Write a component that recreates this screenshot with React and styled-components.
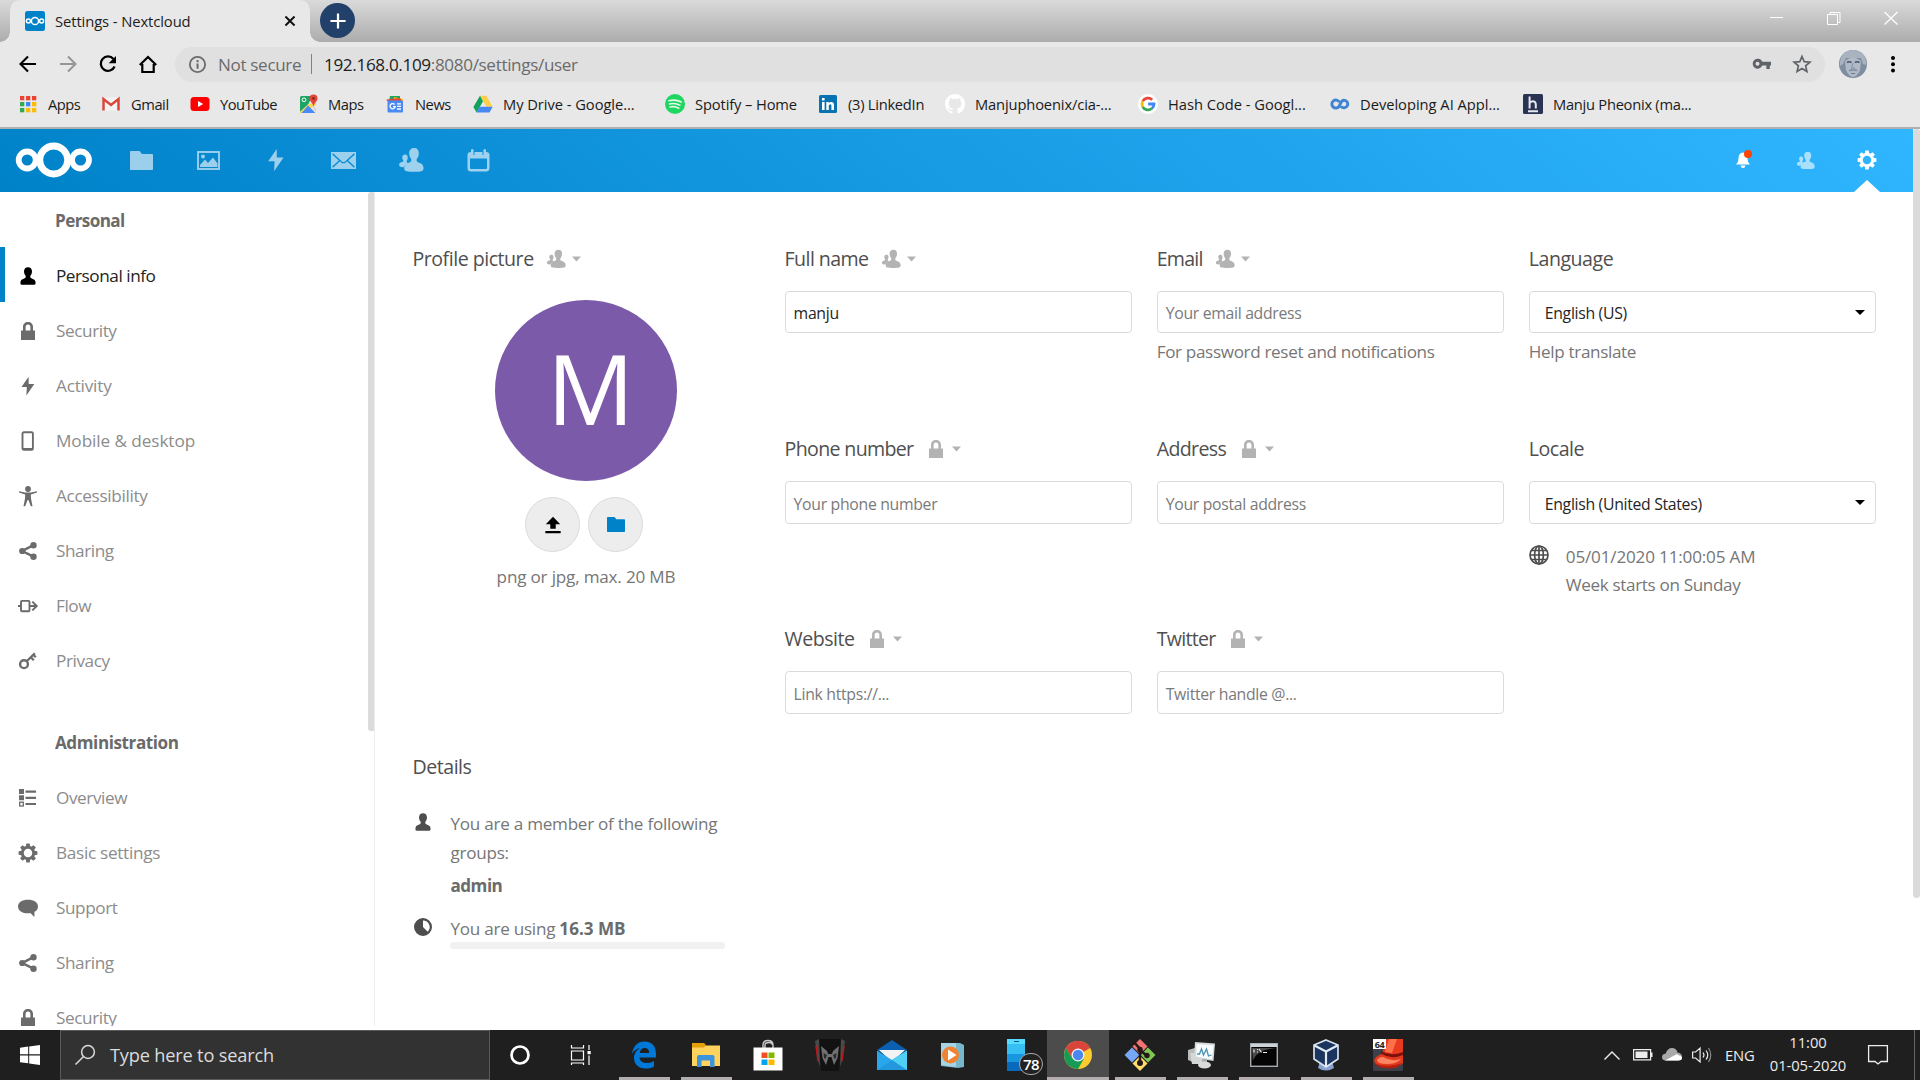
import React from "react";
import styled, { createGlobalStyle, css } from "styled-components";

const GlobalStyle = createGlobalStyle`
  * { box-sizing: border-box; }
  body {
    margin: 0;
    background: #fff;
    overflow: hidden;
    font-family: "Open Sans", "Noto Sans", sans-serif;
    letter-spacing: -0.025em;
  }
  svg { display: block; flex: none; overflow: visible; }
`;

const Screen = styled.div`
  width: 1920px;
  height: 1080px;
  display: flex;
  flex-direction: column;
  background: #fff;
  overflow: hidden;
  white-space: nowrap;
`;

/* ---------- browser chrome ---------- */

const TabStrip = styled.div`
  height: 42px;
  flex: none;
  display: flex;
  align-items: flex-start;
  padding-left: 10px;
  background: linear-gradient(#dadada, #acacac);
`;

const Tab = styled.div`
  position: relative;
  width: 300px;
  height: 42px;
  display: flex;
  align-items: center;
  gap: 10px;
  padding: 0 13px 0 15px;
  background: #e8e8e8;
  border-radius: 10px 10px 0 0;
  font-size: 14.8px;
  color: #1d1d1d;
  letter-spacing: -0.007em;
  &::before, &::after {
    content: "";
    position: absolute;
    bottom: 0;
    width: 10px;
    height: 10px;
  }
  &::before { left: -10px; background: radial-gradient(circle at 0 0, transparent 9.5px, #e8e8e8 10px); }
  &::after { right: -10px; background: radial-gradient(circle at 100% 0, transparent 9.5px, #e8e8e8 10px); }
`;

const TabTitle = styled.span`flex: 1;`;

const NewTab = styled.div`
  width: 35px;
  height: 35px;
  margin: 3px 0 0 10px;
  border-radius: 50%;
  background: #21406a;
  display: grid;
  place-items: center;
`;

const WindowButtons = styled.div`
  margin: 10px 22px 0 auto;
  display: flex;
  gap: 43px;
`;

const Toolbar = styled.div`
  height: 43px;
  flex: none;
  display: flex;
  align-items: center;
  background: #e8e8e8;
  padding: 1px 0 0 17.5px;
`;

const NavButtons = styled.div`
  width: 157.5px;
  display: flex;
  gap: 20px;
`;

const AddressBar = styled.div`
  width: 1650px;
  height: 35px;
  display: flex;
  align-items: center;
  padding: 0 13px;
  border-radius: 18px;
  background: #e0e0e0;
  font-size: 17.1px;
  color: #6b6b6b;
`;

const NotSecure = styled.span`
  width: 95px;
  padding-left: 11px;
  letter-spacing: -0.02em;
`;

const Divider = styled.i`
  width: 1px;
  height: 20px;
  margin: 0 12px 0 9px;
  background: #828282;
`;

const Url = styled.span`
  flex: 1;
  letter-spacing: -0.02em;
  b { font-weight: 400; color: #202124; }
`;

const AddressActions = styled.div`
  display: flex;
  gap: 20px;
`;

const ProfilePhoto = styled.div`
  width: 28px;
  height: 28px;
  margin: 0 24px 0 14px;
  border-radius: 50%;
  overflow: hidden;
`;

const Bookmarks = styled.div`
  height: 44px;
  flex: none;
  display: flex;
  padding: 0 0 4px 18px;
  background: #e8e8e8;
  border-bottom: 2px solid #b0b0b0;
`;

const Bookmark = styled.div`
  width: ${(p) => p.$w}px;
  display: flex;
  align-items: center;
  gap: 10px;
  font-size: 14.7px;
  color: #1b1b1b;
  letter-spacing: ${(p) => p.$ls}em;
`;

/* ---------- Nextcloud ---------- */

const Page = styled.div`
  height: 897px;
  flex: none;
  display: flex;
  overflow: hidden;
`;

const Cloud = styled.div`
  width: 1913px;
  display: flex;
  flex-direction: column;
`;

const PageScroll = styled.div`
  width: 7px;
  height: 769px;
  background: #dbdbdb;
  border-radius: 3px 3px 4px 4px;
`;

const Header = styled.header`
  height: 63px;
  flex: none;
  display: flex;
  align-items: center;
  padding: 0 0 1px 16px;
  background: linear-gradient(40deg, #0082c9 0%, #30b6ff 100%);
  color: #fff;
`;

const AppMenu = styled.nav`
  display: flex;
  margin-left: 16px;
`;

const HeaderCell = styled.div`
  position: relative;
  width: ${(p) => p.$w}px;
  height: 62px;
  display: grid;
  place-items: center;
  opacity: ${(p) => p.$o || 0.6};
`;

const HeaderRight = styled.div`
  margin-left: auto;
  padding-right: 15px;
  display: flex;
`;

const ActivePointer = styled.i`
  position: absolute;
  bottom: -1px;
  left: 18px;
  border: 13px solid transparent;
  border-top: 0;
  border-bottom: 12px solid #fff;
`;

const Body = styled.div`
  flex: 1;
  display: flex;
  min-height: 0;
`;

const Sidebar = styled.aside`
  width: 375px;
  height: 834px;
  flex: none;
  display: flex;
  border-right: 1px solid #ededed;
  overflow: hidden;
`;

const SideList = styled.div`
  width: 368px;
  flex: none;
`;

const SideScroll = styled.div`
  width: 7px;
  height: 539px;
  flex: none;
  background: #dbdbdb;
  border-radius: 3px;
`;

const SideHeading = styled.h2`
  height: 55px;
  margin: ${(p) => (p.$gap ? 28 : 0)}px 0 0;
  padding-left: 55px;
  font-size: 17.1px;
  line-height: ${(p) => (p.$gap ? 56 : 58)}px;
  font-weight: 700;
  color: #6a6a6a;
  letter-spacing: ${(p) => (p.$gap ? -0.025 : -0.035)}em;
`;

const SideItem = styled.div`
  height: 55px;
  display: flex;
  align-items: center;
  gap: 18px;
  padding: ${(p) => p.$top || 0}px 0 0 ${(p) => (p.$active ? 13 : 18)}px;
  border-left: ${(p) => (p.$active ? "5px solid #0082c9" : "0")};
  font-size: 17.2px;
  letter-spacing: ${(p) => p.$ls || -0.025}em;
  color: ${(p) => (p.$active ? "#222" : "#8c8c8c")};
  svg { color: ${(p) => (p.$active ? "#000" : "#6b6b6b")}; }
`;

const Main = styled.main`
  flex: 1;
  padding: 46px 0 0 37.5px;
`;

const Grid = styled.div`
  display: grid;
  grid-template-columns: repeat(4, 347px);
  grid-template-rows: 190px 190px 127px;
  column-gap: 25.1px;
`;

const Cell = styled.section`
  display: flex;
  flex-direction: column;
  ${(p) => p.$tall && css`grid-row: span 3;`}
`;

const FieldHead = styled.h3`
  height: 41px;
  margin: 0 0 12px;
  display: flex;
  align-items: center;
  font-size: 19.6px;
  font-weight: 400;
  letter-spacing: ${(p) => p.$ls || -0.025}em;
  color: #4f4f4f;
  svg { color: #b3b3b3; }
`;

const ScopeMenu = styled.span`
  display: flex;
  align-items: center;
  gap: 6px;
  margin-left: 12.5px;
`;

const Box = styled.div`
  height: ${(p) => (p.$first ? 42 : 43)}px;
  display: flex;
  align-items: center;
  justify-content: space-between;
  padding: 2px ${(p) => (p.$select ? "10px 0 15px" : "8px 0 8px")};
  border: 1px solid #dbdbdb;
  border-radius: 4px;
  font-size: 15.8px;
  letter-spacing: -0.02em;
  color: ${(p) => (p.$filled ? "#252525" : "#7a7a7a")};
`;

const Hint = styled.div`
  padding-top: 7px;
  line-height: 24px;
  font-size: 17.1px;
  letter-spacing: -0.02em;
  color: #767676;
`;

const LocaleInfo = styled.div`
  display: flex;
  gap: 17px;
  padding-top: 19px;
  font-size: 17.1px;
  line-height: 28px;
  letter-spacing: -0.02em;
  color: #767676;
  svg { margin-top: 2px; color: #4d4d4d; }
`;

const LocaleDate = styled.div`letter-spacing: -0.01em;`;

const AvatarColumn = styled.div`
  display: flex;
  flex-direction: column;
  align-items: center;
  padding-top: 9px;
`;

const AvatarNote = styled.div`
  margin-top: 13px;
  line-height: 24px;
  font-size: 17.1px;
  letter-spacing: -0.011em;
  color: #767676;
`;

const Avatar = styled.div`
  width: 182px;
  height: 181px;
  border-radius: 50%;
  background: #7c5aaa;
  color: #fff;
  font-size: 97px;
  line-height: 175px;
  text-align: center;
  letter-spacing: 0;
  padding-left: 9px;
`;

const AvatarActions = styled.div`
  display: flex;
  gap: 8px;
  margin: 16px 4px 0 0;
`;

const RoundButton = styled.div`
  width: 55px;
  height: 55px;
  display: grid;
  place-items: center;
  border-radius: 50%;
  border: 1px solid #dbdbdb;
  background: #ededed;
`;

const Details = styled.section`
  width: 320px;
  padding-top: 1px;
`;

const DetailRow = styled.div`
  display: flex;
  gap: 18px;
  color: #767676;
  font-size: 17.1px;
  line-height: 28.5px;
  letter-spacing: -0.015em;
  margin-top: ${(p) => p.$mt}px;
  svg { color: #4d4d4d; margin-top: 2px; }
`;

const Usage = styled.b`
  color: #6b6b6b;
  letter-spacing: 0;
`;

const Quota = styled.div`
  width: 275px;
  height: 7px;
  margin: -1px 0 0 37.5px;
  border-radius: 4px;
  background: #f1f1f1;
`;

const GroupName = styled.b`
  display: block;
  margin-top: 5px;
  color: #6b6b6b;
  letter-spacing: -0.03em;
`;

/* ---------- Windows taskbar ---------- */

const Taskbar = styled.footer`
  height: 50px;
  margin-top: 4px;
  flex: none;
  display: flex;
  background: #1f1f1f;
  color: #fff;
`;

const Start = styled.div`
  width: 60px;
  display: grid;
  place-items: center;
`;

const SearchBox = styled.div`
  width: 430px;
  display: flex;
  align-items: center;
  gap: 15px;
  padding-left: 14px;
  border: 1px solid #5a5a5a;
  background: #323232;
  color: #dcdcdc;
  font-size: 18.2px;
  letter-spacing: -0.01em;
`;

const Task = styled.div`
  position: relative;
  width: ${(p) => p.$w || 62}px;
  display: grid;
  place-items: center;
  background: ${(p) => (p.$active ? "#4c4c4c" : "none")};
  &::after {
    content: "";
    position: absolute;
    left: ${(p) => (p.$active ? 0 : 6)}px;
    right: ${(p) => (p.$active ? 0 : 5)}px;
    bottom: 0;
    height: ${(p) => (p.$open ? 3 : 0)}px;
    background: #b3adb0;
  }
`;

const Badge = styled.span`
  position: absolute;
  right: 4px;
  bottom: 5px;
  width: 24px;
  height: 22px;
  border: 1px solid #aaa;
  border-radius: 11px;
  background: #222;
  font: 600 15px/20px "Open Sans", sans-serif;
  letter-spacing: -0.04em;
  text-align: center;
`;

const Tray = styled.div`
  margin-left: auto;
  width: 316px;
  display: flex;
  align-items: center;
  font-size: 14.8px;
  color: #ededed;
`;

const Lang = styled.span`
  width: 29px;
  margin: 0 13px 0 13px;
  letter-spacing: -0.015em;
`;

const Clock = styled.div`
  width: 82px;
  text-align: center;
  line-height: 23px;
  padding-bottom: 2px;
  letter-spacing: -0.005em;
`;

const ActionCenter = styled.div`margin-left: 19px;`;

const ShowDesktop = styled.i`
  width: 6px;
  height: 50px;
  margin-left: auto;
  border-left: 1px solid #666;
`;

/* ---------- icons ---------- */

const Svg = ({ s = 20, w, h, vb = "0 0 20 20", children, ...rest }) => (
  <svg width={w || s} height={h || s} viewBox={vb} fill="currentColor" {...rest}>{children}</svg>
);
const line = { fill: "none", stroke: "currentColor" };

const User = () => <Svg><path d="M10 1.2c-2.4 0-4 1.6-4 4.1 0 1.800.6 3.200 1.500 4.300.5 1.300.2 2.200-.8 2.700C4.600 13.300 3 13.600 2.600 15.600c-.3 1.500-.4 3.200 1.200 3.200h12.400c1.600 0 1.500-1.700 1.200-3.200-.4-2-2-2.300-4.100-3.300-1-.5-1.300-1.400-.8-2.700.9-1.100 1.500-2.500 1.500-4.300 0-2.500-1.600-4.100-4-4.100z" /></Svg>;
const Lock = () => <Svg><path d="M10 1C7 1 5 3 5 6v3.500H3V19h14V9.500h-2V6c0-3-2-5-5-5zm0 2.600c1.500 0 2.400 1 2.400 2.600v3.300H7.600V6.200c0-1.600.9-2.600 2.400-2.600z" /></Svg>;
const Bolt = ({ s }) => <Svg s={s}><path d="M10.600.8 3.500 11h5.300l-.4 8.400L16.300 8h-5.600z" /></Svg>;
const Phone = () => <Svg><rect x="4.500" y="1.200" width="10.400" height="17.600" rx="1.300" {...line} strokeWidth="1.900" /><path d="M4 17h11v2H4z" /></Svg>;
const Access = () => <Svg><circle cx="10" cy="3" r="2.900" /><path d="M1.200 5.200 7 6.600h6l5.800-1.400.2 1.400-6.200 1.900.2 4 1.500 7.700h-1.700L10.400 14h-.8l-2.400 6.200H5.500L7 12.500l.2-4L1 6.600z" /></Svg>;
const Share = () => <Svg><circle cx="4.200" cy="10" r="3.100" /><circle cx="15.500" cy="4.200" r="3.200" /><circle cx="15.500" cy="15.700" r="3.200" /><path d="M15.500 4.200 4.200 10l11.300 5.700" {...line} strokeWidth="2.500" /></Svg>;
const Flow = () => <Svg><rect x="3" y="4.900" width="8.500" height="10.300" rx="1" {...line} strokeWidth="1.900" /><path d="M0 10h3M12 10h6.500M14.300 5.600l4.400 4.400-4.400 4.400" {...line} strokeWidth="2" /></Svg>;
const Key = () => <Svg><circle cx="6" cy="13.200" r="3.900" {...line} strokeWidth="2.400" /><path d="m8.500 10.500 8.300-8.200M12.800 6.200l3 3M15.300 3.800l2.500 2.500" {...line} strokeWidth="2.300" /></Svg>;
const Overview = () => <Svg><path d="M1 1h5v5H1zM1 7.300h5v5H1zM7.500 2.500H18v2.200H7.500zM7.500 8.700H18v2.200H7.500zM7.500 14.900H18v2.200H7.500z" /><rect x="1.700" y="14.200" width="3.600" height="3.800" {...line} strokeWidth="1.300" /></Svg>;
const Gear = ({ s }) => (
  <Svg s={s}>
    <circle cx="10" cy="10" r="5.700" {...line} strokeWidth="2.900" />
    {[0, 45, 90, 135, 180, 225, 270, 315].map((a) => <path key={a} d="m8.300 .6h3.400l.5 3.400H7.800z" transform={`rotate(${a} 10 10)`} />)}
  </Svg>
);
const Comment = () => <Svg><path d="M10 1.700c5.800 0 10 2.600 10 6.700 0 2.600-1.300 4.200-3.500 5.400l-.1 5.300-4-4c-.8.2-1.600.2-2.400.2-5.800 0-10-2.800-10-6.900s4.200-6.700 10-6.700z" /></Svg>;
const Contacts = ({ s }) => (
  <Svg s={s}>
    <path d="M12.500.8c-2.400 0-3.900 1.600-3.900 4 0 1.900.7 3.300 1.500 4.300.4 1.200.1 2.100-.9 2.600-2 .9-3.700 1.300-4.200 3.100-.6 2.800.2 3.400 1.700 3.800 1.800.6 9.600.6 11.300 0 1.600-.5 2-1.500 1.400-3.800-.5-1.800-2.100-2.200-4.100-3.100-1-.5-1.300-1.400-.8-2.600.9-1 1.500-2.400 1.500-4.300 0-2.400-1.200-4-3.500-4z" />
    <path d="M5.400 5.700c1.300 0 2.100.8 2.100 2.200 0 1.600-.5 2.400-.9 3 0 .8.800 1.200 1.600 1.600-2.200.7-3.300 1.500-3.600 3.100-1 0-2-.1-2.600-.4-1.600-.6-1.500-2.900.4-3.500 1-.4 1.800-.6 1.800-1.200-.6-.8-.9-1.600-.9-2.700 0-1.400.9-2.100 2.100-2.100z" />
  </Svg>
);
const Folder = ({ w, h, color }) => <Svg w={w} h={h} vb="0 0 23 19" preserveAspectRatio="none" color={color}><path d="M.8 0h8.700l2.500 3h10.200q.8 0 .8.800v14.400q0 .8-.8.800H.8q-.8 0-.8-.8V.8Q0 0 .8 0z" /></Svg>;
const Caret = () => <Svg w={9} h={5} vb="0 0 9 5"><path d="M0 .5h9L4.500 5.500z" /></Svg>;
const Globe = () => (
  <Svg><g {...line} strokeWidth="1.700"><circle cx="10" cy="10" r="9" /><ellipse cx="10" cy="10" rx="4.400" ry="9" /><path d="M10 1v18M1 10h18M2.300 5.500h15.400M2.300 14.500h15.400" /></g></Svg>
);
const Pie = () => <Svg><path fillRule="evenodd" d="M10 1a9 9 0 1 0 0 18 9 9 0 0 0 0-18zm0 2.400a6.600 6.600 0 0 1 4.700 11.300L10 10z" /></Svg>;

const NcLogo = ({ w, h }) => (
  <Svg w={w} h={h} vb="0 0 76 36" {...line} stroke="#fff">
    <circle cx="11.200" cy="18" r="8.500" strokeWidth="5.800" />
    <circle cx="37.700" cy="18" r="14" strokeWidth="6.900" />
    <circle cx="64.500" cy="18" r="8.500" strokeWidth="5.800" />
  </Svg>
);

const MarkIcons = {
  apps: <Svg>{["#ea4335", "#ea4335", "#ea4335", "#34a853", "#4285f4", "#fbbc05", "#34a853", "#fbbc05", "#fbbc05"].map((c, i) => <rect key={i} x={2 + (i % 3) * 6} y={2 + Math.floor(i / 3) * 6} width="4.300" height="4.300" fill={c} />)}</Svg>,
  gmail: <Svg><path d="M1.500 3.500h17v13h-17z" fill="#f4f4f4" /><path d="M2.500 16.500V5l7.500 6 7.500-6v11.500" fill="none" stroke="#d9483b" strokeWidth="2.500" /></Svg>,
  youtube: <Svg><rect x=".5" y="3" width="19" height="14" rx="3.500" fill="#f00" /><path d="m8 7 5.200 3L8 13z" fill="#fff" /></Svg>,
  maps: <Svg><rect x="2" y="2" width="16" height="17" rx="1.500" fill="#e9e9e9" /><path d="M2 3.500Q2 2 3.500 2H14l-3.500 8L2 18z" fill="#1fa463" /><path d="m10 11 8-4v4l-14 8H2v-1z" fill="#ffd54a" /><path d="m10 11.500 7.500 7.500H3.500z" fill="#4a8af4" /><path d="m13 10 5 5v3z" fill="#ccc" /><path d="M15.500.5a4 4 0 0 1 4 4c0 3-3.300 4-4 8-.7-4-4-5-4-8a4 4 0 0 1 4-4z" fill="#e5453a" /><circle cx="15.500" cy="4.500" r="1.400" fill="#8b2a21" /><circle cx="6" cy="5.800" r="1.900" fill="none" stroke="#fff" /></Svg>,
  news: <Svg><path d="m5 2 10 0v5H4z" fill="#1fa463" /><path d="m9 3 9 2-1 4H8z" fill="#fbbc05" /><path d="M1.500 5.500 15 4l2 3H2z" fill="#e5453a" /><rect x="2.500" y="6.500" width="15.500" height="12" rx="1" fill="#4a8af4" /><path d="M12 9.800h4M12 12.400h4M12 15h4M9.600 10.500a2.600 2.600 0 1 0 .6 2.200H8" fill="none" stroke="#fff" strokeWidth="1.300" /></Svg>,
  drive: <Svg><path d="M7 1.700h6.300l6.300 11h-6.200z" fill="#ffcf48" /><path d="M7 1.700 10 7.300 3.600 18.500.4 13z" fill="#11a05d" /><path d="M6.700 12.700h13L16.500 18.500h-13z" fill="#4687f4" /></Svg>,
  spotify: <Svg><circle cx="10" cy="10" r="10" fill="#1ed760" /><path d="M4 6.800q6.500-1.800 12.300 1.200M4.500 10q5.500-1.500 10.500 1.200M5 13q4.700-1.200 8.800 1.200" fill="none" stroke="#e8f8ee" strokeWidth="1.600" strokeLinecap="round" /></Svg>,
  linkedin: <Svg><rect x="1" y="1" width="18" height="18" rx="1.500" fill="#0873b2" /><path d="M4 8h2.600v8H4zM4 4h2.600v2.500H4zM8.300 8h2.500v1.200Q11.500 8 13.200 8 16 8 16 11.200V16h-2.600v-4.300q0-1.500-1.200-1.500-1.400 0-1.400 1.700V16H8.300z" fill="#fff" /></Svg>,
  github: <Svg vb="0 0 16 16"><path fill="#fff" d="M8 0C3.580 0 0 3.580 0 8c0 3.540 2.290 6.530 5.470 7.590.4.070.550-.170.550-.380 0-.190-.010-.820-.010-1.490-2.010.370-2.530-.490-2.690-.940-.090-.230-.480-.940-.820-1.130-.280-.150-.680-.520-.010-.530.630-.010 1.080.580 1.230.820.720 1.210 1.870.870 2.330.660.070-.520.280-.870.510-1.070-1.780-.2-3.640-.890-3.640-3.950 0-.870.310-1.590.820-2.150-.080-.2-.360-1.020.080-2.120 0 0 .670-.210 2.200.820.640-.180 1.320-.270 2-.270s1.360.090 2 .270c1.530-1.040 2.200-.820 2.200-.820.440 1.100.160 1.920.080 2.120.510.560.820 1.270.820 2.150 0 3.070-1.870 3.750-3.650 3.950.290.250.540.730.540 1.480 0 1.070-.010 1.930-.010 2.200 0 .210.150.460.550.380A8.010 8.010 0 0 0 16 8c0-4.420-3.580-8-8-8z" /></Svg>,
  google: <Svg><circle cx="10" cy="10" r="10" fill="#fff" /><g fill="none" strokeWidth="2.800"><path d="M14.200 5.800A6 6 0 0 0 4.700 7.200" stroke="#ea4335" /><path d="M4.700 7.200a6 6 0 0 0 0 5.600" stroke="#fbbc05" /><path d="M4.700 12.800a6 6 0 0 0 9.200 1.700" stroke="#34a853" /><path d="M13.900 14.500A6 6 0 0 0 16 10h-5.800" stroke="#4285f4" /></g></Svg>,
  coursera: <Svg><g fill="none" stroke="#3f86d2" strokeWidth="3"><path d="M9.300 8A4 4 0 1 0 9 12.500C10.500 10.500 10.500 6.200 14 6.200a3.800 3.800 0 1 1-3 6.200" /></g></Svg>,
  hacker: <Svg><rect width="20" height="20" rx="1.500" fill="#2b3354" /><path d="M6.600 2.500v12M6.600 9q3-3 5.300-1 .9.900.9 2.500v4M5 17.200h10" fill="none" stroke="#e6e8ee" strokeWidth="2" /></Svg>,
};

const bookmarks = [
  ["apps", "Apps", 83, -0.032], ["gmail", "Gmail", 89, -0.03], ["youtube", "YouTube", 108, -0.032],
  ["maps", "Maps", 87, -0.032], ["news", "News", 88, -0.03], ["drive", "My Drive - Google...", 192, -0.003],
  ["spotify", "Spotify – Home", 153, -0.008], ["linkedin", "(3) LinkedIn", 127, -0.018],
  ["github", "Manjuphoenix/cia-...", 193, -0.009], ["google", "Hash Code - Googl...", 192, -0.001],
  ["coursera", "Developing AI Appl...", 193, -0.001], ["hacker", "Manju Pheonix (ma...", 180, -0.018],
];

const personal = [
  ["Personal info", User, -0.027], ["Security", Lock], ["Activity", Bolt, -0.012], ["Mobile & desktop", Phone, -0.005],
  ["Accessibility", Access, -0.02], ["Sharing", Share], ["Flow", Flow], ["Privacy", Key],
];
const admin = [["Overview", Overview], ["Basic settings", Gear, -0.018], ["Support", Comment], ["Sharing", Share], ["Security", Lock]];

const Head = ({ label, icon: Icon, ls }) => (
  <FieldHead $ls={ls}>{label}{Icon && <ScopeMenu><Icon /><Caret /></ScopeMenu>}</FieldHead>
);
const Field = ({ label, icon, ls, text, first, filled, select, children }) => (
  <Cell>
    <Head label={label} icon={icon} ls={ls} />
    <Box $first={first} $filled={filled} $select={select}>{text}{select && <Svg w={10} h={5} vb="0 0 10 5" color="#000"><path d="M0-1h10L5 4z" /></Svg>}</Box>
    {children}
  </Cell>
);

const BrowserChrome = () => (
  <>
    <TabStrip>
      <Tab>
        <Svg><rect width="20" height="20" rx="2.500" fill="#0082c9" /><g fill="none" stroke="#fff" strokeWidth="1.500"><circle cx="10" cy="10" r="3.600" /><circle cx="3.400" cy="10" r="2" /><circle cx="16.600" cy="10" r="2" /></g></Svg>
        <TabTitle>Settings - Nextcloud</TabTitle>
        <Svg s={14}><path d="m3.500 3.500 13 13m0-13-13 13" {...line} stroke="#111" strokeWidth="2.800" /></Svg>
      </Tab>
      <NewTab><Svg s={16}><path d="M10 .5v19M.5 10h19" stroke="#fff" strokeWidth="2.800" /></Svg></NewTab>
      <WindowButtons>
        <Svg w={14} h={14} vb="0 0 14 14"><path d="M0 7.500h13" stroke="#fff" /></Svg>
        <Svg w={14} h={14} vb="0 0 14 14"><path d="M.5 4.500h10v10H.5zM3 4V2.500h10v10h-2" fill="none" stroke="#fff" /></Svg>
        <Svg w={14} h={14} vb="0 0 14 14"><path d="m.5 2 13 12.500m0-12.500L.5 14.500" stroke="#fff" strokeWidth="1.200" /></Svg>
      </WindowButtons>
    </TabStrip>
    <Toolbar>
      <NavButtons>
        <Svg><path d="M18 10H3M10 2.500 2.500 10l7.500 7.500" {...line} strokeWidth="2.100" /></Svg>
        <Svg color="#959595"><path d="M2 10h15M10 2.500l7.500 7.500-7.500 7.500" {...line} strokeWidth="2" /></Svg>
        <Svg><path d="M16.600 12.500A7.200 7.200 0 1 1 15.500 5" {...line} strokeWidth="2.300" /><path d="M18 2v7.300h-7.300z" /></Svg>
        <Svg><path d="M1.800 11 10 3l8.200 8M4.300 10v8h11.400v-8" {...line} strokeWidth="2.200" /></Svg>
      </NavButtons>
      <AddressBar>
        <Svg s={19}><circle cx="10" cy="10" r="8" {...line} strokeWidth="1.900" /><path d="M9 9h2.100v5.500H9zM9 5.300h2.100v2.200H9z" /></Svg>
        <NotSecure>Not secure</NotSecure>
        <Divider />
        <Url><b>192.168.0.109</b>:8080/settings/user</Url>
        <AddressActions>
          <Svg color="#5f6368"><path fillRule="evenodd" d="M10.300 7.800H19v3.800h-1.200V15h-3.400v-3.400h-4.100A5 5 0 1 1 10.300 7.800zM5.500 7.700a2 2 0 1 0 0 4 2 2 0 0 0 0-4z" /></Svg>
          <Svg color="#5f6368"><path d="m10 2.500 2.200 5.200 5.700.5-4.300 3.700 1.300 5.500-4.900-2.900-4.900 2.900 1.300-5.500-4.300-3.700 5.700-.5z" {...line} strokeWidth="1.700" /></Svg>
        </AddressActions>
      </AddressBar>
      <ProfilePhoto>
        <Svg s={28} vb="0 0 28 28">
          <rect width="28" height="28" fill="#7f8da0" /><path d="M1 16C0 4 8 0 14 0s14 3 13 15l-3-1-2-6H7l-3 6z" fill="#a9b3c0" />
          <path d="M6 11q8-7 16 0l-1 9q-3 7-7 7t-7-7z" fill="#b0bac7" />
          <path d="M8 12.500q2-1.500 4.500 0M16 12.500q2-1.500 4.500 0" stroke="#48556a" strokeWidth="1.700" fill="none" />
          <path d="m14 13-1.500 5h3.500" stroke="#8491a3" fill="none" /><path d="M9.500 20q4.500-2.500 9 0l-1 1.500q-3.500-1.500-7 0z" fill="#8592a4" /><path d="M12 23.500h4" stroke="#6d7b8e" />
        </Svg>
      </ProfilePhoto>
      <Svg w={4} h={20} vb="0 0 4 20"><circle cx="2" cy="4" r="2" /><circle cx="2" cy="10.200" r="2" /><circle cx="2" cy="16.400" r="2" /></Svg>
    </Toolbar>
    <Bookmarks>
      {bookmarks.map(([icon, text, w, ls]) => <Bookmark key={icon} $w={w} $ls={ls}>{MarkIcons[icon]}{text}</Bookmark>)}
    </Bookmarks>
  </>
);

const CloudHeader = () => (
  <Header>
    <NcLogo w={76} h={36} />
    <AppMenu>
      <HeaderCell $w={67}><Folder w={23} h={19} /></HeaderCell>
      <HeaderCell $w={67}><Svg w={23} h={19} vb="0 0 23 19"><rect x="1" y="1" width="21" height="17" {...line} strokeWidth="1.900" /><circle cx="6" cy="5.500" r="2" /><path d="M3 16v-2l5-5.500 3 3.500 5-5.500 4.500 6V16z" /></Svg></HeaderCell>
      <HeaderCell $w={68}><Bolt s={24} /></HeaderCell>
      <HeaderCell $w={66}><Svg w={25} h={17} vb="0 0 25 17"><path fillRule="evenodd" d="M0 0h25v17H0zM2 1.200 11.500 10h2L23 1.200l.8 1.200-6.600 6.200 6.600 6-.8 1.200-7-6.500-2 2h-3l-2-2-7 6.500-.8-1.200 6.600-6-6.600-6.200z" /></Svg></HeaderCell>
      <HeaderCell $w={69}><Contacts s={26} /></HeaderCell>
      <HeaderCell $w={66}><Svg w={23} h={23} vb="0 0 23 23"><path fillRule="evenodd" d="M4 3h2v3h1.500V3h8v3H17V3h2q3.500 0 3.500 3v13q0 3.500-3.500 3.500H4Q.5 22.500.5 19V6q0-3 3.500-3zM3 9.500V19q0 1 1 1h15q1 0 1-1V9.500z" /><rect x="4" y="0" width="2.500" height="7.500" rx="1.200" /><rect x="16.500" y="0" width="2.500" height="7.500" rx="1.200" /></Svg></HeaderCell>
    </AppMenu>
    <HeaderRight>
      <HeaderCell $w={62} $o={1}><Svg><path d="M9 2.500q4.500.5 4.500 6 0 4 2.500 6H2q2.500-2 2.500-6 0-5.500 4.500-6zM6.500 15.500h5q-.5 2.500-2.500 2.500t-2.500-2.500z" /><circle cx="14" cy="4" r="4" fill="#ff4402" /></Svg></HeaderCell>
      <HeaderCell $w={61}><Contacts s={19} /></HeaderCell>
      <HeaderCell $w={62} $o={1}><Gear s={20} /><ActivePointer /></HeaderCell>
    </HeaderRight>
  </Header>
);

const Settings = () => (
  <Main>
    <Grid>
      <Cell $tall>
        <Head label="Profile picture" icon={Contacts} />
        <AvatarColumn>
          <Avatar>M</Avatar>
          <AvatarActions>
            <RoundButton><Svg s={17} color="#000"><path d="M10.600 1 2.100 9.800h5.300V15h6.400V9.800h5.300zM1.600 17.500h18v2.700h-18z" /></Svg></RoundButton>
            <RoundButton><Folder w={18} h={15} color="#0082c9" /></RoundButton>
          </AvatarActions>
          <AvatarNote>png or jpg, max. 20 MB</AvatarNote>
        </AvatarColumn>
      </Cell>
      <Field first label="Full name" icon={Contacts} ls={-0.03} text="manju" filled />
      <Field first label="Email" icon={Contacts} ls={-0.04} text="Your email address"><Hint>For password reset and notifications</Hint></Field>
      <Field first label="Language" text="English (US)" filled select><Hint>Help translate</Hint></Field>
      <Field label="Phone number" icon={Lock} ls={-0.034} text="Your phone number" />
      <Field label="Address" icon={Lock} ls={-0.034} text="Your postal address" />
      <Field label="Locale" text="English (United States)" filled select>
        <LocaleInfo><Globe /><div><LocaleDate>05/01/2020 11:00:05 AM</LocaleDate>Week starts on Sunday</div></LocaleInfo>
      </Field>
      <Field label="Website" icon={Lock} text="Link https://..." />
      <Field label="Twitter" icon={Lock} ls={-0.036} text="Twitter handle @..." />
    </Grid>
    <Details>
      <Head label="Details" />
      <DetailRow $mt={23}><User /><div>You are a member of the following<br />groups:<GroupName>admin</GroupName></div></DetailRow>
      <DetailRow $mt={14}><Pie /><div>You are using <Usage>16.3 MB</Usage></div></DetailRow>
      <Quota />
    </Details>
  </Main>
);

const apps = [
  { id: "edge", open: true, icon: <Svg s={28} vb="0 0 28 28"><path fill="#0078d7" d="M2 13C3 5 8 .5 14.500.5c8 0 12 5.500 11.500 14v2H9.500c.5 4 3.500 5.500 7.500 5.500 3 0 5-.8 7-2v5.500c-2 1.500-5 2-8.500 2C8.500 27.500 4 23 4 17c0-4.500 2.500-8 6.500-10C6.500 7.500 3.500 10 2 13zm7.700-1h9.500c0-3-1.500-5-4.500-5s-4.600 2-5 5z" /></Svg> },
  { id: "files", open: true, icon: <Svg s={28} vb="0 0 28 28"><path d="M0 2h10l2 2.500h16V25H0z" fill="#ffd35e" /><path d="M0 2h12l2 2-2 2.500H0z" fill="#e3a009" /><path d="M5 26V16q0-2 2-2h13.500q2 0 2 2v10h-4.500v-6.500h-8.500V26z" fill="#3c94dc" /></Svg> },
  { id: "store", icon: <Svg w={30} h={32} vb="0 0 30 32"><path d="M10 9V6q0-4.500 5-4.500T20 6v3M12 9V6q0-2.500 4-2.500T19 6" fill="none" stroke="#ccc" strokeWidth="1.400" /><path d="M.5 8.500h29V31.500h-29z" fill="#fff" /><path d="M8.500 13.500h6V19h-6z" fill="#f25022" /><path d="M15.500 13.500h6V19h-6z" fill="#7fba00" /><path d="M8.500 20.500h6V26h-6z" fill="#00a4ef" /><path d="M15.500 20.500h6V26h-6z" fill="#ffb900" /></Svg> },
  { id: "predator", icon: <Svg s={32} vb="0 0 32 32"><path d="M5 0h22l-2 32H7z" fill="#121212" /><path d="m1 2 4-2 1 28-2-6z" fill="#4a4a4a" /><path d="m31 2-4-2-1 28 2-6z" fill="#4a4a4a" /><path d="M2 7 4 22M30 7l-2 15" stroke="#c4151b" strokeWidth="1.500" /><path d="m7 7 6 5 1 3h4l1-3 6-5-1.500 12-3.500 7-2.500-8h-3L12 26l-3.500-7z" fill="#707070" /><path d="m9.500 14 3.500 2-1.500 4-1.500-1zM22.500 14 19 16l1.500 4 1.500-1z" fill="#2b2b2b" /></Svg> },
  { id: "mail", icon: <Svg s={30} vb="0 0 30 30"><path d="M0 10 15 0l15 10-15 10z" fill="#0a5fae" /><path d="M2 10h26L15 22z" fill="#f3f3f3" /><path d="M0 10.500 15 20l15-9.500V30H0z" fill="#28a8ea" /><path d="M0 30 30 10.500V30z" fill="#2498df" /><path d="m15 20 15-9.500V30z" fill="#50d0f5" /></Svg> },
  { id: "media", icon: <Svg s={26} vb="0 0 26 26"><path d="M0 1h19l4 2v22l-6 1-17-2z" fill="#78b6cb" /><path d="M0 1h15v24L0 23z" fill="#a7d4e4" /><circle cx="9.500" cy="13" r="8.500" fill="#f08331" /><path d="m7 7.500 8.500 5.500L7 18.500z" fill="#fff" /></Svg> },
  { id: "phone", badge: "78", icon: <Svg w={18} h={32} vb="0 0 18 32"><path d="M0 0h18v15H0z" fill="#36bff2" /><path d="M0 0h18v5H0z" fill="#55dcff" /><path d="M0 15h18v8H0z" fill="#1896df" /><path d="M0 23h18v9H0z" fill="#0869bd" /><path d="M7 2.500h5" stroke="#06519a" /></Svg> },
  { id: "chrome", open: true, active: true, icon: <Svg s={28} vb="0 0 28 28"><circle cx="14" cy="14" r="14" fill="#fccb2f" /><path d="M14 14 1.900 7A14 14 0 0 1 26.100 7z" fill="#d9453b" /><path d="M14 7h12.100A14 14 0 0 0 1.900 7L8 17z" fill="#d9453b" /><path d="M1.900 7A14 14 0 0 0 14 28l6-10.500L14 20l-6-3z" fill="#169b57" /><circle cx="14" cy="14" r="6.500" fill="#f4f4f4" /><circle cx="14" cy="14" r="5.200" fill="#4a87ee" /></Svg> },
  { id: "git", open: true, icon: <Svg s={32} vb="0 0 32 32"><path d="m16 0 7.500 7.500L16 15 8.500 7.500z" fill="#f57272" /><path d="m8 8.500 7.500 7.500L8 23.500.5 16z" fill="#77a8f5" /><path d="m24 8.500 7.500 7.500-7.500 7.500-7.500-7.500z" fill="#7fc653" /><path d="m16 17 7.500 7.500L16 32l-7.500-7.500z" fill="#ffdc6b" /><path d="m10 3 6 7v14m0-13 7 6" stroke="#231a18" strokeWidth="2.500" fill="none" /><circle cx="16" cy="10.500" r="2.700" fill="#231a18" /><circle cx="16" cy="24" r="3" fill="#231a18" /><circle cx="23" cy="16.500" r="2.700" fill="#231a18" /></Svg> },
  { id: "monitor", open: true, icon: <Svg s={28} vb="0 0 28 28"><path d="m0 9 7-2v15l-7-3z" fill="#b9bdb9" /><path d="M2 12h14v11H4z" fill="#d5d7d5" /><path d="m7 1 20 1.500L25.500 20 6 17z" fill="#d3d8da" /><path d="m8.500 3 17 1.200L24 18.500 8 15.500z" fill="#f8fcfd" /><path d="m9 13 2.500 0 2-5 2 6 3-6 2 7 3-1" fill="none" stroke="#4b91b5" strokeWidth="1.300" /><path d="M14 18h5v5h-5z" fill="#aaadae" /><ellipse cx="16.500" cy="24" rx="6.500" ry="3.500" fill="#d9dbdb" /></Svg> },
  { id: "cmd", open: true, icon: <Svg w={28} h={24} vb="0 0 28 24"><rect x=".7" y=".7" width="26.600" height="22.600" fill="#050505" stroke="#a5abae" strokeWidth="1.400" /><path d="M1 1h26v3H1z" fill="#cdd4d8" /><path d="M2 5h24q-20 2-23 13z" fill="#4a4a4a" /><path d="M4 6.500v3M7 6.500h1M7 9h1M9 6l2.500 3.500M13 9.500h4" stroke="#eee" strokeWidth="1.200" /></Svg> },
  { id: "vbox", open: true, icon: <Svg s={32} vb="0 0 32 32"><path d="M10 22h12l2 7q-8 5-16 0z" fill="#8ba2cf" /><path d="M16 1 28 6v14l-12 8L4 20V6z" fill="#1c355e" stroke="#d7e2ef" strokeWidth="1.700" /><path d="M4.500 6.500 16 12.500l11.500-6M16 12.500V28" stroke="#e1eaf5" strokeWidth="2.200" fill="none" /></Svg> },
  { id: "redhat", open: true, icon: <Svg w={30} h={32} vb="0 0 30 32"><rect width="30" height="32" rx="1" fill="#3c4149" /><path d="M12 0h18v15q-9 6-22 2l3-8z" fill="#e93a20" /><path d="M16 0h8l-5 14-7-1z" fill="#ff7048" /><path d="M8 12q10 6 22 1v5q-12 5-22-1z" fill="#7d100a" /><path d="M9 15q9 6 21 1v8q-4 5-15 5T1 22q1-5 8-7z" fill="#e5391d" /><path d="M4 21q2-3 6-3 8 5 18 2-4 5-14 5T4 21z" fill="#ff8460" /><path d="M1 24q13 6 28 0-4 6-14 5.500T1 24z" fill="#b3200f" /><path d="M0 0h13v10H0z" fill="#fff" /><text x="1.800" y="8.500" fontSize="9" fontWeight="700" fill="#222">64</text></Svg> },
];

const WindowsTaskbar = () => (
  <Taskbar>
    <Start><Svg><path d="M0 2.800 8.200 1.600v7.700H0zM9.200 1.500 20 0v9.300H9.200zM0 10.400h8.200v7.900L0 17.200zM9.200 10.400H20V20l-10.800-1.500z" /></Svg></Start>
    <SearchBox>
      <Svg><circle cx="13" cy="7" r="6.400" {...line} strokeWidth="1.500" /><path d="M8.300 11.700.5 19.500" {...line} strokeWidth="1.500" /></Svg>
      Type here to search
    </SearchBox>
    <Task $w={60}><Svg><circle cx="10" cy="10" r="8.500" {...line} strokeWidth="2.700" /></Svg></Task>
    <Task $w={63}><Svg vb="1.500 0 20 20"><path d="M1 0v3h12V0M1 6h12v9H1zM1 20v-2h12v2M18.500 0v5M18.500 10.500V20" {...line} strokeWidth="1.200" /><path d="M17 6h3.200v3.200H17z" /></Svg></Task>
    {apps.map((a) => <Task key={a.id} $open={a.open} $active={a.active}>{a.icon}{a.badge && <Badge>{a.badge}</Badge>}</Task>)}
    <Tray>
      <Svg w={16} h={9} vb="0 0 16 9"><path d="m.5 8.500 7.500-7.500 7.500 7.500" {...line} strokeWidth="1.400" /></Svg>
      <Svg w={62} h={20} vb="0 0 62 20">
        <path d="M13.600 4.600h17v10.300h-17z" {...line} strokeWidth="1.200" /><path d="M15.500 6.500h12v6.500h-12zM31 7.500h1.500v4.500H31z" />
        <path d="M45 15.500q-3-.5-3-3.200Q42 9 45.500 8.800 47.500 3 52 3q4.500 0 5.500 4.500 4.500.5 4.500 4.500 0 3.500-4 3.500z" fill="#a9a9a9" /><path d="m45 15.500 11-6q1-.8 3 1 3 .5 3 2.500 0 2.500-4 2.500z" fill="#fff" />
      </Svg>
      <Svg w={30} h={20} vb="0 0 30 20"><path d="M10.600 7h3l4.500-4v14l-4.500-4h-3zM21 7.500q2 2.500 0 5M24 5.500q3.500 4.500 0 9" {...line} strokeWidth="1.200" /><path d="M26.500 3q4.500 7 0 14" {...line} stroke="#8a8a8a" strokeWidth="1.200" /></Svg>
      <Lang>ENG</Lang>
      <Clock>11:00<br />01-05-2020</Clock>
      <ActionCenter><Svg><path d="M.6.6h18.800V16.500H13L10 19l-3-2.500H.6z" {...line} strokeWidth="1.300" /></Svg></ActionCenter>
      <ShowDesktop />
    </Tray>
  </Taskbar>
);

export default function App() {
  return (
    <Screen>
      <GlobalStyle />
      <BrowserChrome />
      <Page>
        <Cloud>
          <CloudHeader />
          <Body>
            <Sidebar>
              <SideList>
                <SideHeading>Personal</SideHeading>
                {personal.map(([t, I, ls], i) => <SideItem key={t} $active={i === 0} $ls={ls} $top={2}><I />{t}</SideItem>)}
                <SideHeading $gap>Administration</SideHeading>
                {admin.map(([t, I, ls]) => <SideItem key={t} $ls={ls}><I />{t}</SideItem>)}
              </SideList>
              <SideScroll />
            </Sidebar>
            <Settings />
          </Body>
        </Cloud>
        <PageScroll />
      </Page>
      <WindowsTaskbar />
    </Screen>
  );
}
